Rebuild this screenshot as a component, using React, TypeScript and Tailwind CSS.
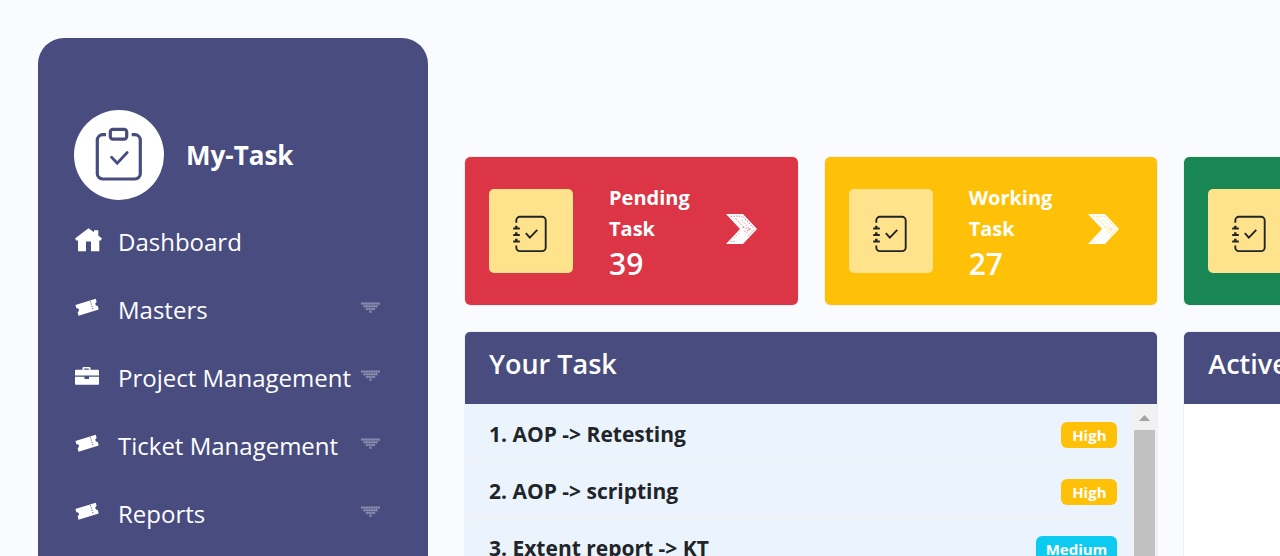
import React from 'react';

function LogoIcon() {
  return (
    <svg viewBox="0 0 90 90" className="h-full w-full" fill="none" stroke="#484c7f" strokeWidth="3.2" aria-hidden="true">
      <path d="M32 24.7h-3.2a5.5 5.5 0 0 0-5.5 5.5v33.5a5.3 5.3 0 0 0 5.3 5.3h32.4a5.3 5.3 0 0 0 5.3-5.3V30.2a5.5 5.5 0 0 0-5.5-5.5h-3.1" />
      <rect x="36.3" y="19.4" width="16.4" height="9.8" rx="2.6" />
      <path d="m37.6 47.3 5.6 5.8 10-10.6" strokeLinecap="round" strokeWidth="2.8" />
    </svg>
  );
}

function NotebookIcon() {
  return (
    <svg viewBox="0 0 84 84" className="h-full w-full" fill="none" stroke="#212529" strokeWidth="1.9" aria-hidden="true">
      <path d="M27.3 33.8v-2.4a3.6 3.6 0 0 1 3.6-3.6h22.2a3.6 3.6 0 0 1 3.6 3.6v27.1a3.6 3.6 0 0 1-3.600 3.600H30.900a3.600 3.600 0 0 1-3.600-3.600v-2" />
      <path d="M24.2 39.5h6.6M24.2 46h6.6M24.2 52.5h6.6" strokeWidth="1.8" />
      <path d="M27.3 36.8v3M27.3 43.3v3M27.3 49.8v3" strokeWidth="2.4" />
      <path d="m36.8 44.2 4 4.4 7.5-7.8" />
    </svg>
  );
}

function ArrowIcon({ hatch }: { hatch: string }) {
  return (
    <svg viewBox="0 0 31 30" className="mb-1 h-[30px] w-[31px] shrink-0" aria-hidden="true">
      <path d="M0 0h17l14 15-14 15H0l14-15z" fill="#fff" />
      <g className={hatch} fill="none" strokeWidth="0.7">
        <path d="M5 2.2h11.500l11.500 12.300" strokeDasharray="1.400 1.200" />
        <path d="m9.500 4.500 9.500 10" strokeDasharray="1.800 1.600" />
        <path d="m15.500 6 8.500 9-5 5.500" strokeDasharray="1 1.400" />
        <path d="m28 15.500-6 6.500" strokeDasharray="1.400 1.200" />
        <path d="M4.500 27.500h5M8 24l6-6.500" strokeDasharray="1 1.800" />
        <path d="m17 13.500 8 1.500-7 2.500" strokeDasharray="1.200 1.600" />
      </g>
    </svg>
  );
}

function HomeIcon() {
  return (
    <svg viewBox="0 0 27 24" className="h-6 w-[27px]" fill="#fff" aria-hidden="true">
      <path d="M13.5.2 19 4.200V2.200h4.300v5.200L27 10.600l-1.500 2.200-1.200-.5V23.200h-8.300v-9.600h-5v9.600H3V12.300l-1.500.5L0 10.600z" />
    </svg>
  );
}

function TicketIcon() {
  return (
    <svg viewBox="0 0 24 24" className="h-6 w-6" aria-hidden="true">
      <path
        fill="#fff"
        d="M.4 9 20.7 2.8l1 3.2c-1.2.5-1.5 1.6-1.2 2.6.3.9 1.2 1.5 2.2 1.2l1 3.7-20.2 6.2-.9-3.7c1.1-.4 1.6-1.3 1.3-2.3-.3-1-1.3-1.6-2.4-1.3z"
      />
      <path d="m15.4 5.200 3 9.200" stroke="#484c7f" strokeWidth="0.9" strokeDasharray="1.2 1.2" />
    </svg>
  );
}

function BriefcaseIcon() {
  return (
    <svg viewBox="0 0 24 24" className="h-6 w-6" fill="#fff" aria-hidden="true">
      <path
        fillRule="evenodd"
        d="M7.5 5.800V4.200q0-1.200 1.200-1.200h5.600q1.200 0 1.200 1.200v1.600H23q1 0 1 1v4.700H0V6.800q0-1 1-1zM9.200 5.800h4.600V4.500H9.200z"
      />
      <path d="M0 12.700h9.500v2.300h4.500v-2.300H24V20q0 .8-.8.800H.8Q0 20.800 0 20z" />
    </svg>
  );
}

function DottedCaret() {
  const rows = [8, 6, 4, 1];
  return (
    <svg viewBox="0 0 20 12" className="h-3 w-5 shrink-0" fill="#fff" fillOpacity="0.33" aria-hidden="true">
      {rows.map((n, r) =>
        Array.from({ length: n }, (_, i) => (
          <circle key={`${r}-${i}`} cx={10.5 + (i - (n - 1) / 2) * 2.4} cy={1.6 + r * 2.7} r="1.3" />
        )),
      )}
    </svg>
  );
}

const menu = [
  { label: 'Dashboard', icon: <HomeIcon />, nested: false },
  { label: 'Masters', icon: <TicketIcon />, nested: true },
  { label: 'Project Management', icon: <BriefcaseIcon />, nested: true },
  { label: 'Ticket Management', icon: <TicketIcon />, nested: true },
  { label: 'Reports', icon: <TicketIcon />, nested: true },
];

const stats = [
  { title: 'Pending', count: 39, bg: 'bg-[#dc3545]', hatch: 'stroke-[#dc3545]' },
  { title: 'Working', count: 27, bg: 'bg-[#ffc107]', hatch: 'stroke-[#ffc107]' },
  { title: '', count: null, bg: 'bg-[#198754]', hatch: 'stroke-[#198754]' },
];

const tasks = [
  { name: '1. AOP -> Retesting', priority: 'High', color: 'bg-[#ffc107]' },
  { name: '2. AOP -> scripting', priority: 'High', color: 'bg-[#ffc107]' },
  { name: '3. Extent report -> KT', priority: 'Medium', color: 'bg-[#0dcaf0]' },
];

function Sidebar() {
  return (
    <aside className="mt-[38px] ml-[38px] w-[390px] shrink-0 rounded-t-[26px] bg-[#484c7f] px-9 pt-[72px] text-white">
      <a href="#home" className="flex items-center gap-[22px]">
        <span className="size-[90px] shrink-0 rounded-full bg-white">
          <LogoIcon />
        </span>
        <span className="text-[26px] leading-8 font-bold">My-Task</span>
      </a>
      <nav className="mt-2">
        <ul>
          {menu.map((item) => (
            <li key={item.label}>
              <a href="#menu" className="flex h-[68px] items-center">
                <span className="mb-1 w-11 shrink-0 pl-px">{item.icon}</span>
                <span className="flex-1 text-[24px] leading-9 whitespace-nowrap">{item.label}</span>
                {item.nested && (
                  <span className="mr-3 mb-1">
                    <DottedCaret />
                  </span>
                )}
              </a>
            </li>
          ))}
        </ul>
      </nav>
    </aside>
  );
}

export default function App() {
  return (
    <div className="flex h-screen overflow-hidden bg-[#fafbfe] font-['Open_Sans','Noto_Sans',sans-serif] text-[#212529]">
      <Sidebar />
      <main className="ml-9 min-w-0 flex-1 overflow-hidden pt-[156px]">
        <div className="grid w-[1054px] grid-cols-3 gap-[25px]">
          {stats.map((s) => (
            <article
              key={s.bg}
              className={`flex h-[150px] items-center gap-9 rounded-md border border-[#f0f0f0] bg-clip-padding px-6 text-white ${s.bg}`}
            >
              <span className="size-[84px] shrink-0 rounded-[5px] bg-[#ffe28c]">
                <NotebookIcon />
              </span>
              {s.count !== null && (
                <>
                  <div className="pt-1">
                    <h6 className="text-[20px] leading-[31px] font-bold">
                      {s.title}
                      <br />
                      Task
                    </h6>
                    <p className="text-[30px] leading-10 font-semibold">{s.count}</p>
                  </div>
                  <ArrowIcon hatch={s.hatch} />
                </>
              )}
            </article>
          ))}

          <article className="col-span-2 overflow-hidden rounded-md border border-[#f0f0f0] bg-white">
            <header className="h-[72px] bg-[#484c7f] px-6 pt-3">
              <h4 className="text-[27px] leading-10 font-semibold text-white">Your Task</h4>
            </header>
            <div className="flex h-[500px]">
              <ul className="flex-1 bg-[#ebf4fc]">
                {tasks.map((t) => (
                  <li key={t.name} className="flex h-[57px] items-center justify-between border-b border-[#f0f0f0] pr-[15px] pl-6">
                    <span className="pt-1 text-[21px] leading-7 font-bold">{t.name}</span>
                    <span
                      className={`mt-1.5 min-w-14 rounded-md px-2.5 text-center text-[15px] leading-[26px] font-bold text-white ${t.color}`}
                    >
                      {t.priority}
                    </span>
                  </li>
                ))}
              </ul>
              <div className="flex w-[25px] flex-col bg-[#f1f1f1] px-0.5">
                <svg viewBox="0 0 21 26" className="h-[26px] w-full shrink-0" aria-hidden="true">
                  <path d="M5 17h11l-5.500-6z" fill="#a3a3a3" />
                </svg>
                <div className="flex-1 bg-[#c1c1c1]" />
              </div>
            </div>
          </article>
          <article className="overflow-hidden rounded-md border border-[#f0f0f0] bg-white">
            <header className="h-[72px] bg-[#484c7f] px-6 pt-3">
              <h4 className="text-[27px] leading-10 font-semibold text-white">Active</h4>
            </header>
          </article>
        </div>
      </main>
    </div>
  );
}
